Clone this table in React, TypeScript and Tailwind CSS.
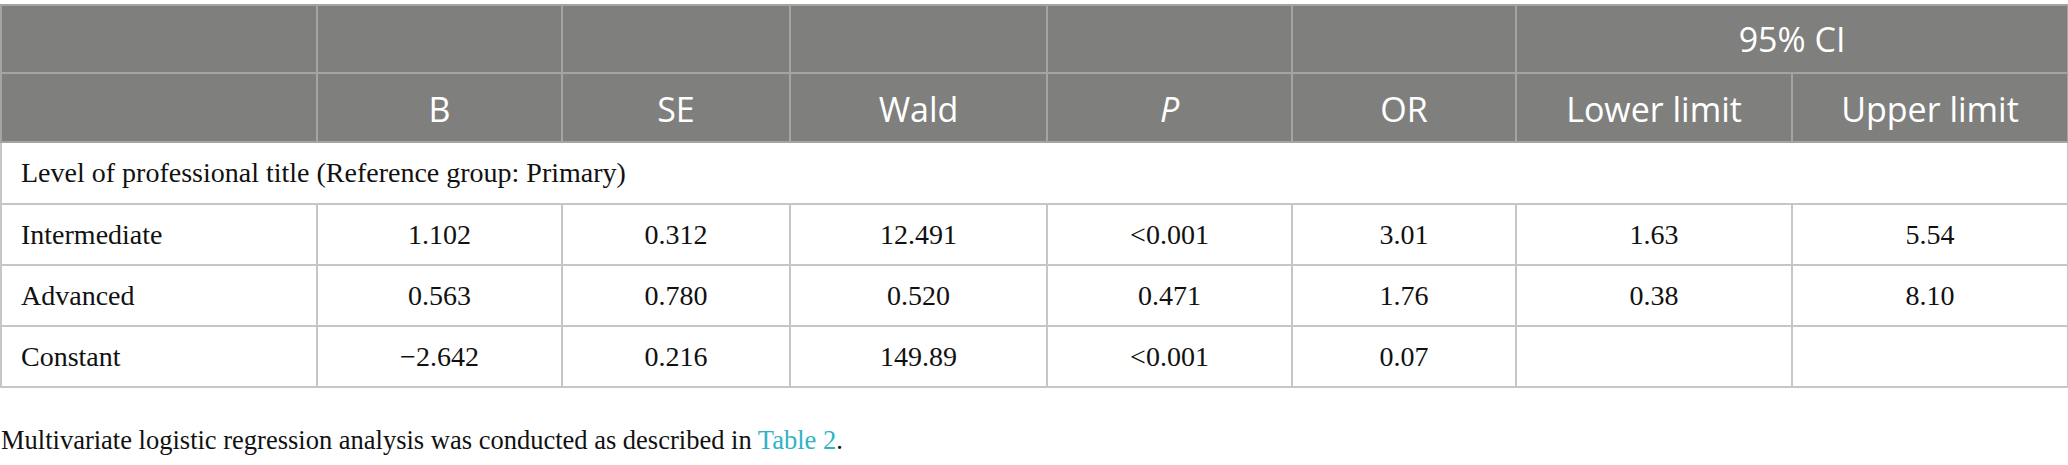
import React from "react";

const widths = [316, 245, 228, 257, 245, 224, 276, 276];

const rows: string[][] = [
  ["Intermediate", "1.102", "0.312", "12.491", "<0.001", "3.01", "1.63", "5.54"],
  ["Advanced", "0.563", "0.780", "0.520", "0.471", "1.76", "0.38", "8.10"],
  ["Constant", "\u22122.642", "0.216", "149.89", "<0.001", "0.07", "", ""],
];

const serif = "font-['Liberation_Serif','Times_New_Roman',serif]";

export default function App() {
  return (
    <div className="w-[2068px] h-[465px] bg-white pt-[4px]">
      <table className="border-collapse table-fixed w-[2067px]">
        <colgroup>
          {widths.map((w, i) => (
            <col key={i} style={{ width: w }} />
          ))}
        </colgroup>
        <thead className="font-['Open_Sans','Noto_Sans',sans-serif] text-white font-normal text-[34px]">
          <tr className="h-[68px] bg-[#7f807e]">
            <th className="border-2 border-[#a4a5a3] font-normal"></th>
            <th className="border-2 border-[#a4a5a3] font-normal"></th>
            <th className="border-2 border-[#a4a5a3] font-normal"></th>
            <th className="border-2 border-[#a4a5a3] font-normal"></th>
            <th className="border-2 border-[#a4a5a3] font-normal"></th>
            <th className="border-2 border-[#a4a5a3] font-normal"></th>
            <th colSpan={2} className="border-2 border-[#a4a5a3] font-normal text-center leading-none">
              95% CI
            </th>
          </tr>
          <tr className="h-[69px] bg-[#7f807e]">
            <th className="border-2 border-[#a4a5a3] font-normal"></th>
            <th className="border-2 border-[#a4a5a3] font-normal text-center leading-none pt-[2px]">B</th>
            <th className="border-2 border-[#a4a5a3] font-normal text-center leading-none pt-[2px]">SE</th>
            <th className="border-2 border-[#a4a5a3] font-normal text-center leading-none pt-[2px]">Wald</th>
            <th className="border-2 border-[#a4a5a3] font-normal text-center leading-none pt-[2px] italic">P</th>
            <th className="border-2 border-[#a4a5a3] font-normal text-center leading-none pt-[2px]">OR</th>
            <th className="border-2 border-[#a4a5a3] font-normal text-center leading-none pt-[2px]">Lower limit</th>
            <th className="border-2 border-[#a4a5a3] font-normal text-center leading-none pt-[2px]">Upper limit</th>
          </tr>
        </thead>
        <tbody className={`${serif} text-[28px] text-[#111111]`}>
          <tr className="h-[62px]">
            <td colSpan={8} className="border-2 border-[#c6c6c6] pl-[19px] text-left leading-none">
              Level of professional title (Reference group: Primary)
            </td>
          </tr>
          {rows.map((r, ri) => (
            <tr key={ri} className="h-[61px]">
              {r.map((c, ci) => (
                <td
                  key={ci}
                  className={`border-2 border-[#c6c6c6] leading-none ${
                    ci === 0 ? "text-left pl-[19px]" : "text-center"
                  }`}
                >
                  {c}
                </td>
              ))}
            </tr>
          ))}
        </tbody>
      </table>
      <p className={`${serif} text-[26.5px] leading-[31px] text-[#111111] mt-[37px] pl-[1px]`}>
        Multivariate logistic regression analysis was conducted as described in{" "}
        <span className="text-[#2fb3c6]">Table 2</span>.
      </p>
    </div>
  );
}
